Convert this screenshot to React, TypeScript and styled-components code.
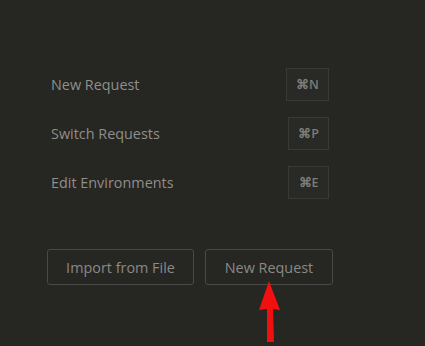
import React from "react";
import styled, { createGlobalStyle } from "styled-components";

const Global = createGlobalStyle`
  html, body { margin: 0; padding: 0; background: #262622; }
  body { width: 425px; height: 346px; overflow: hidden; font-family: "Open Sans", "Noto Sans", sans-serif; }
`;

const Page = styled.div`
  position: relative;
  width: 425px;
  height: 346px;
  box-sizing: border-box;
  padding: 68px 0 0 47px;
  background: #262622;
`;

const List = styled.div`
  display: flex;
  flex-direction: column;
  gap: 16px;
  width: 278px;
  padding-left: 4px;
`;

const Row = styled.div`
  display: flex;
  align-items: center;
  justify-content: space-between;
  height: 33px;
`;

const Label = styled.span`
  color: #8f8f8b;
  font-size: 14.4px;
`;

const Key = styled.span<{ $w: number }>`
  display: flex;
  align-items: center;
  justify-content: center;
  width: ${(p) => p.$w}px;
  height: 33px;
  box-sizing: border-box;
  border: 1px solid #393936;
  background: #292926;
  color: #7c7c78;
  font-size: 12.5px;
  font-weight: 600;
`;

const Buttons = styled.div`
  display: flex;
  gap: 11px;
  margin-top: 50px;
`;

const Button = styled.button<{ $w: number }>`
  width: ${(p) => p.$w}px;
  height: 36px;
  box-sizing: border-box;
  border: 1px solid #494945;
  border-radius: 3px;
  background: transparent;
  color: #8a8a86;
  font-family: "Open Sans", "Noto Sans", sans-serif;
  font-size: 14.4px;
  padding: 0;
`;

const Arrow = styled.svg`
  position: absolute;
  left: 256px;
  top: 280px;
`;

const shortcuts = [
  { label: "New Request", key: "⌘N", w: 43 },
  { label: "Switch Requests", key: "⌘P", w: 41 },
  { label: "Edit Environments", key: "⌘E", w: 41 },
];

export default function App() {
  return (
    <Page>
      <Global />
      <List>
        {shortcuts.map((s) => (
          <Row key={s.label}>
            <Label>{s.label}</Label>
            <Key $w={s.w}>{s.key}</Key>
          </Row>
        ))}
      </List>
      <Buttons>
        <Button $w={147}>Import from File</Button>
        <Button $w={128}>New Request</Button>
      </Buttons>
      <Arrow width="28" height="66" viewBox="0 0 28 66">
        <path d="M13 1 L24 30 L17 29 L18 62 L11 62 L11 29 L3 30 Z" fill="#f01010" />
      </Arrow>
    </Page>
  );
}
